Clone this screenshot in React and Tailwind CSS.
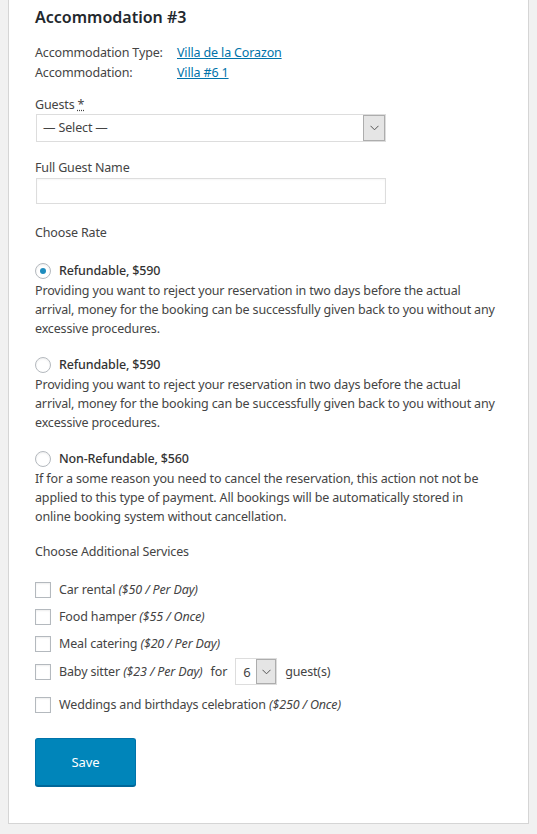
import React from "react";

function Radio({ checked }) {
  return (
    <span className="flex h-4 w-4 shrink-0 items-center justify-center rounded-full border border-[#b4b9be] bg-white shadow-[inset_0_1px_2px_rgba(0,0,0,0.07)]">
      {checked && <span className="h-[6px] w-[6px] rounded-full bg-[#1e8cbe]" />}
    </span>
  );
}

function Check() {
  return (
    <span className="h-4 w-4 shrink-0 border border-[#b4b9be] bg-white shadow-[inset_0_1px_2px_rgba(0,0,0,0.07)]" />
  );
}

function Chevron() {
  return (
    <svg width="9" height="6" viewBox="0 0 9 6" fill="none">
      <path d="M0.5 0.8 L4.5 4.8 L8.5 0.8" stroke="#555" strokeWidth="1" />
    </svg>
  );
}

function Rate({ checked, title, text, className }) {
  return (
    <div className={className}>
      <div className="flex h-5 items-center gap-2">
        <Radio checked={checked} />
        <span className="font-medium text-[#333]">{title}</span>
      </div>
      <p className="max-w-[460px] leading-[19px]">{text}</p>
    </div>
  );
}

function Service({ name, price, className, children }) {
  return (
    <div className={"flex items-center gap-2 " + (className || "")}>
      <Check />
      <span>
        {name} <em>{price}</em>
      </span>
      {children}
    </div>
  );
}

export default function App() {
  const refund =
    "Providing you want to reject your reservation in two days before the actual arrival, money for the booking can be successfully given back to you without any excessive procedures.";
  return (
    <div
      className="min-h-[834px] bg-[#f1f1f1] px-2 text-[12.5px] leading-5 tracking-[-0.15px] text-[#444]"
      style={{ fontFamily: '"Noto Sans", "Open Sans", sans-serif' }}
    >
      <div className="border-x border-b border-[#d5d5d5] bg-white px-[26px] pt-[6px] pb-[37px]">
        <h2 className="-mt-px text-[16px] font-semibold leading-6 tracking-normal text-[#23282d]">Accommodation #3</h2>

        <div className="mt-[14px] grid grid-cols-[142px_1fr]">
          <span>Accommodation Type:</span>
          <a href="#" className="text-[#0073aa] underline">Villa de la Corazon</a>
          <span>Accommodation:</span>
          <a href="#" className="text-[#0073aa] underline">Villa #6 1</a>
        </div>

        <div className="mt-3">
          <div>
            Guests <span className="underline decoration-dotted">*</span>
          </div>
          <div className="-mt-px ml-px flex h-7 w-[350px] items-stretch border border-[#ddd] bg-white">
            <span className="flex flex-1 items-center pl-[6px]">— Select —</span>
            <span className="flex w-[22px] items-center justify-center border border-[#adadad] bg-[#e5e5e5]">
              <Chevron />
            </span>
          </div>
        </div>

        <div className="mt-4">
          <div>Full Guest Name</div>
          <div className="ml-px h-[26px] w-[350px] border border-[#ddd] bg-white shadow-[inset_0_1px_2px_rgba(0,0,0,0.04)]" />
        </div>

        <div className="mt-[19px]">Choose Rate</div>

        <Rate className="mt-[18px]" checked title="Refundable, $590" text={refund} />
        <Rate className="mt-[17px]" title="Refundable, $590" text={refund} />
        <Rate
          className="mt-[17px]"
          title="Non-Refundable, $560"
          text="If for a some reason you need to cancel the reservation, this action not not be applied to this type of payment. All bookings will be automatically stored in online booking system without cancellation."
        />

        <div className="mt-4">Choose Additional Services</div>

        <div className="mt-[18px] flex flex-col">
          <Service name="Car rental" price="($50 / Per Day)" />
          <Service className="mt-[7px]" name="Food hamper" price="($55 / Once)" />
          <Service className="mt-[7px]" name="Meal catering" price="($20 / Per Day)" />
          <Service className="mt-[4px]" name="Baby sitter" price="($23 / Per Day)">
            <span>for</span>
            <span className="flex h-[27px] w-[42px] items-stretch border border-[#ddd] bg-white">
              <span className="flex flex-1 items-center pl-[7px] text-[13px]">6</span>
              <span className="flex w-[20px] items-center justify-center border border-[#adadad] bg-[#e5e5e5]">
                <Chevron />
              </span>
            </span>
            <span>guest(s)</span>
          </Service>
          <Service className="mt-[10px]" name="Weddings and birthdays celebration" price="($250 / Once)" />
        </div>

        <button className="mt-[23px] h-12 w-[101px] rounded-[3px] border border-[#0073aa] border-b-[#006799] bg-[#0085ba] text-[13px] text-white shadow-[0_1px_0_#006799]">
          Save
        </button>
      </div>
    </div>
  );
}
